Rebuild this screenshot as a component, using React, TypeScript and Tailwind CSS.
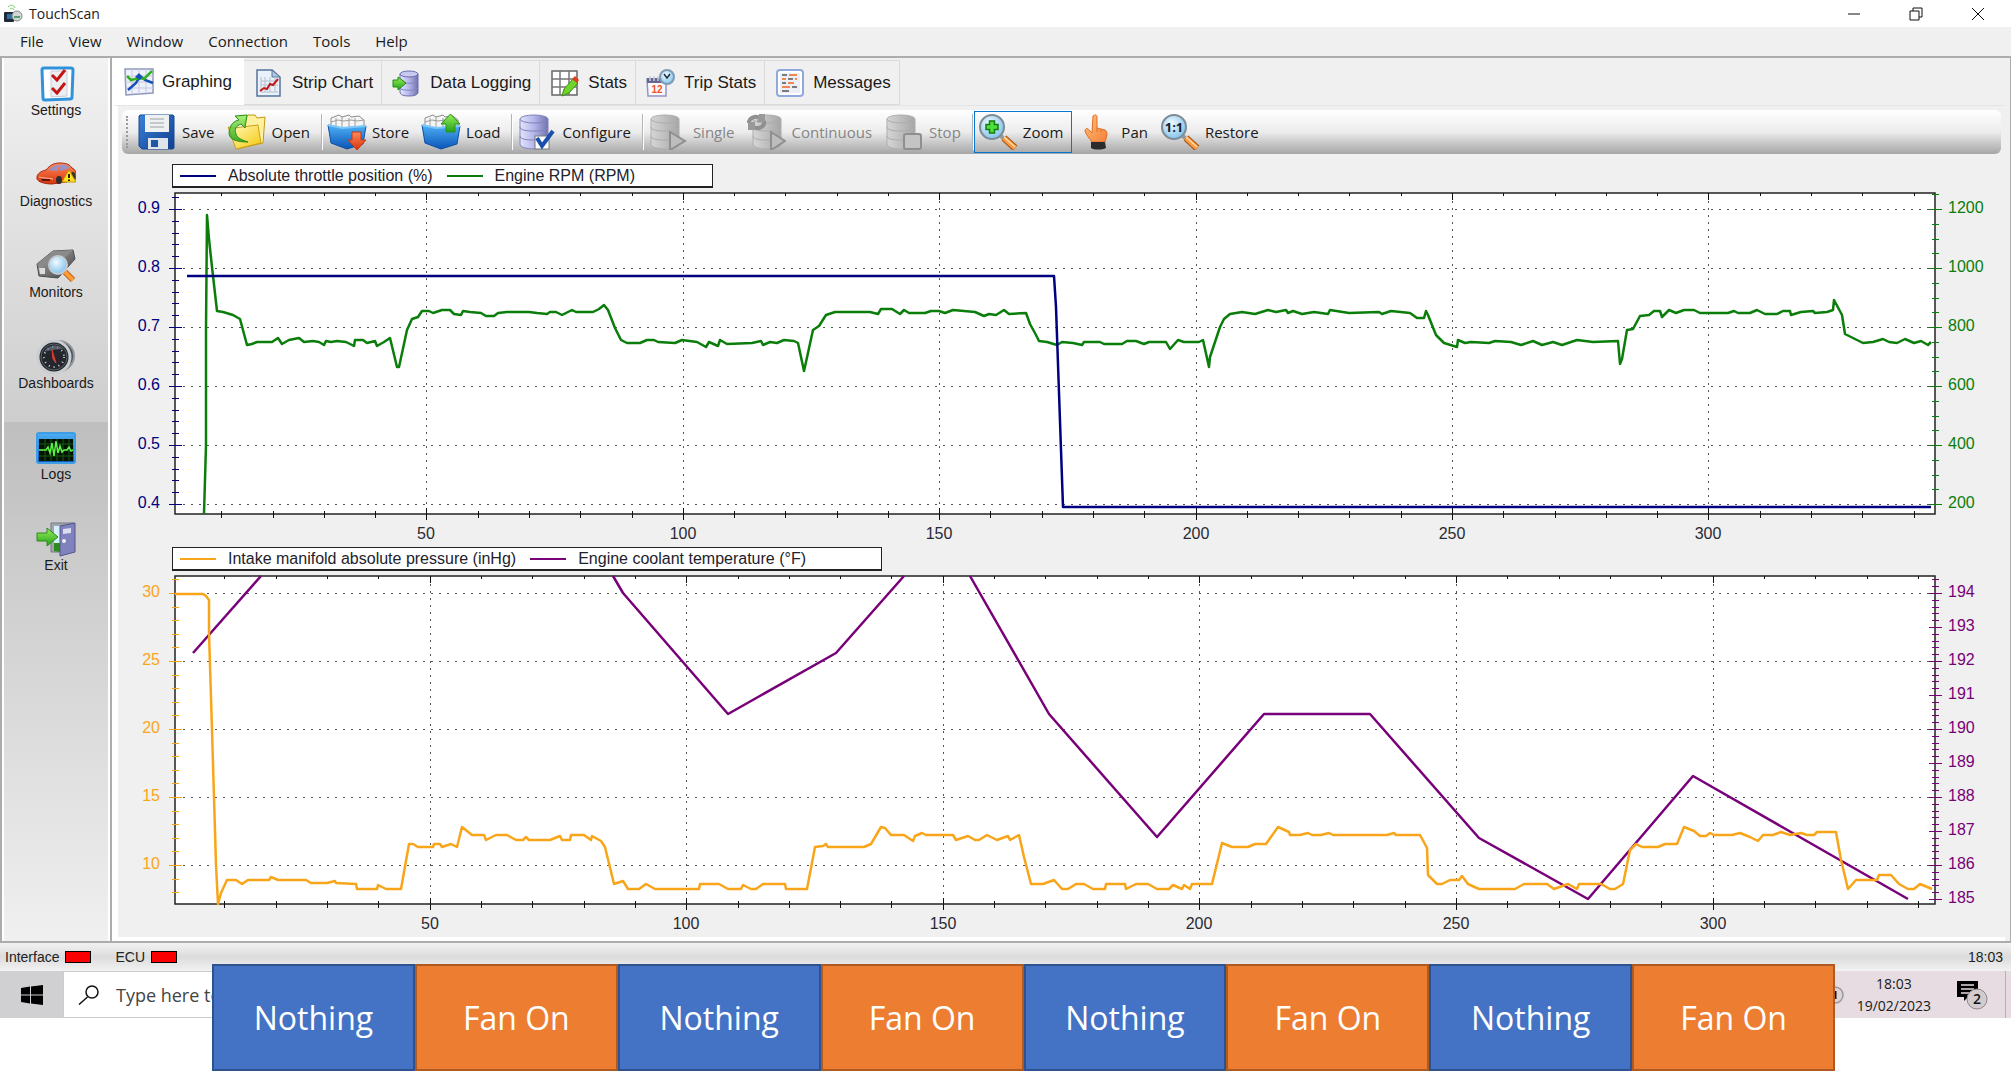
// TouchScan main window — "Logs" page with the Graphing tab open, plus the
// taskbar and the fan annotation strip that sits under the charts.

import type { ReactNode } from "react";
import clsx from "clsx";

type Point = [number, number];

/* ------------------------------------------------------------------ */
/* Chart data. Traces are kept in plot pixels (plot is 1760px wide).   */
/* ------------------------------------------------------------------ */

const RPM =
  "29,321 31,252 31,137 32,22 34,46 37,74 42,118 48,119 58,122 65,126 72,152 77,151 82,149 97,149 103,145 107,151 114,147 124,145 129,149 138,148 144,149 149,152 151,148 156,149 162,148 171,149 179,153 180,147 188,147 192,150 200,148 202,153 209,149 215,145 222,174 224,174 232,137 237,126 243,124 247,118 254,118 258,120 267,117 275,117 279,121 286,122 288,118 295,119 306,120 311,123 319,123 323,120 332,119 354,119 362,120 372,121 375,119 381,119 387,122 397,117 401,119 418,119 424,116 429,112 433,117 440,135 446,147 452,150 465,150 472,147 479,147 483,149 500,150 507,147 522,149 531,154 534,149 543,153 545,147 552,151 577,150 586,148 588,152 595,149 602,150 609,147 619,148 623,150 629,178 631,169 638,137 644,133 651,122 660,119 695,119 703,121 706,116 717,116 725,121 729,117 734,120 750,120 756,118 764,118 770,120 778,117 789,118 800,119 809,123 814,121 821,122 829,117 834,121 851,120 855,131 861,142 864,148 872,149 882,152 887,149 898,150 907,152 909,149 925,149 929,151 947,151 952,148 961,148 969,151 974,149 991,149 995,156 1003,147 1009,149 1024,149 1028,147 1034,174 1035,164 1045,134 1049,126 1055,121 1067,119 1080,121 1093,117 1101,119 1111,117 1113,120 1118,118 1127,121 1139,119 1153,121 1155,117 1174,120 1204,119 1207,121 1216,118 1235,120 1242,125 1249,125 1251,118 1253,122 1261,142 1269,150 1282,154 1283,147 1290,150 1296,149 1314,150 1320,148 1336,149 1346,152 1358,148 1367,152 1378,149 1387,152 1402,147 1418,149 1443,148 1445,171 1447,166 1452,137 1458,136 1465,123 1474,122 1479,118 1485,118 1487,124 1494,117 1501,120 1509,117 1519,117 1525,120 1553,120 1559,118 1563,120 1575,120 1582,117 1590,121 1602,121 1608,118 1615,118 1616,122 1626,119 1638,118 1640,120 1652,119 1658,117 1659,107 1667,122 1670,141 1680,146 1688,150 1698,149 1708,146 1714,149 1722,150 1730,146 1739,150 1746,148 1753,152 1756,149";

const THROTTLE = "12,83 879,83 881,114 888,314 1756,314";

const PRESSURE =
  "0,18 28,18 31,20 34,24 34,57 37,154 41,289 43,328 46,317 52,304 61,304 67,308 73,304 94,304 96,301 103,304 131,304 136,307 152,307 160,305 161,307 181,308 182,313 202,313 203,309 211,313 226,313 234,268 238,268 243,271 258,271 259,268 265,268 267,271 276,268 282,271 287,251 297,259 309,259 311,264 321,259 332,259 341,264 348,264 351,261 354,264 375,264 385,260 387,264 395,264 396,259 409,259 416,264 417,260 426,265 430,271 439,308 448,305 453,313 464,313 471,308 480,313 524,313 525,308 544,308 553,313 566,313 568,309 576,313 581,313 588,308 610,308 611,313 632,313 640,271 648,270 651,268 653,271 689,271 696,268 706,251 710,252 716,259 729,259 738,265 740,260 747,257 751,259 778,259 781,264 793,260 800,264 804,264 812,259 822,264 833,260 835,264 844,259 849,281 856,308 868,308 879,304 887,313 893,313 901,308 909,308 918,313 930,313 931,308 950,308 951,313 961,308 973,308 982,313 994,313 998,309 1007,313 1009,309 1015,313 1017,308 1037,308 1047,267 1057,271 1073,271 1080,268 1091,268 1103,251 1114,256 1115,259 1125,259 1133,257 1137,259 1146,259 1154,257 1158,259 1212,259 1219,257 1221,259 1245,259 1252,272 1253,299 1262,308 1267,308 1275,304 1284,304 1287,300 1293,308 1304,313 1340,313 1349,308 1372,308 1379,313 1393,308 1402,313 1404,308 1426,308 1435,313 1440,313 1448,308 1455,274 1461,268 1467,271 1483,271 1490,268 1502,268 1509,251 1519,255 1525,260 1531,260 1535,257 1539,259 1557,259 1565,257 1575,261 1583,265 1588,259 1598,259 1606,256 1615,259 1626,257 1632,259 1639,259 1642,256 1661,256 1666,284 1673,313 1681,304 1702,304 1704,299 1716,299 1724,308 1733,313 1739,313 1745,308 1757,313";

const COOLANT = [
  "18,77 86,0",
  "438,0 448,17 553,138 661,77 729,0",
  "795,0 874,138 982,261 1089,138 1195,138 1304,262 1413,323 1518,200 1733,323",
];

interface AxisSpec {
  color: string;
  labels: string[];
  first: number; // y of the first label's tick
  step: number; // distance between major ticks
  minor: number; // minor divisions per major
}

interface ChartSpec {
  name: string;
  height: number; // plot height
  boxHeight: number; // svg height
  xStart: number; // x of the tick for 0
  xUnit: number; // width of 10 units
  gridFirst: number;
  gridStep: number;
  left: AxisSpec;
  right: AxisSpec;
  traces: { color: string; points: string }[];
}

const NAVY = "#000080";
const GREEN = "#0a7d0a";
const ORANGE = "#f9a51a";
const PURPLE = "#780078";
const PLOT_W = 1760;

const CHARTS: ChartSpec[] = [
  {
    name: "Throttle position and engine RPM",
    height: 321,
    boxHeight: 359,
    xStart: -5,
    xUnit: 51.28,
    gridFirst: 16,
    gridStep: 59,
    left: {
      color: NAVY,
      labels: ["0.9", "0.8", "0.7", "0.6", "0.5", "0.4"],
      first: 16,
      step: 59,
      minor: 5,
    },
    right: {
      color: GREEN,
      labels: ["1200", "1000", "800", "600", "400", "200"],
      first: 16,
      step: 59,
      minor: 4,
    },
    traces: [
      { color: GREEN, points: RPM },
      { color: NAVY, points: THROTTLE },
    ],
  },
  {
    name: "Manifold pressure and coolant temperature",
    height: 328,
    boxHeight: 366,
    xStart: -2,
    xUnit: 51.32,
    gridFirst: 17,
    gridStep: 68,
    left: {
      color: ORANGE,
      labels: ["30", "25", "20", "15", "10"],
      first: 17,
      step: 68,
      minor: 5,
    },
    right: {
      color: PURPLE,
      labels: ["194", "193", "192", "191", "190", "189", "188", "187", "186", "185"],
      first: 17,
      step: 34,
      minor: 5,
    },
    traces: [
      ...COOLANT.map((points) => ({ color: PURPLE, points })),
      { color: ORANGE, points: PRESSURE },
    ],
  },
];

function minorTicks(axis: AxisSpec, height: number): number[] {
  const gap = axis.step / axis.minor;
  const ticks: number[] = [];
  let y = axis.first;
  while (y - gap > 1) y -= gap;
  for (; y < height - 2; y += gap) ticks.push(Math.round(y));
  return ticks;
}

function Axis({ axis, x, height, side }: { axis: AxisSpec; x: number; height: number; side: "left" | "right" }) {
  return (
    <g stroke={axis.color} strokeWidth="1" shapeRendering="crispEdges">
      {minorTicks(axis, height).map((y) => (
        <line key={y} x1={x - 3} x2={x + 4} y1={y + 0.5} y2={y + 0.5} />
      ))}
      {axis.labels.map((label, i) => {
        const y = axis.first + i * axis.step;
        return (
          <g key={label}>
            <line x1={x - 6} x2={x + 7} y1={y + 0.5} y2={y + 0.5} />
            <text
              x={side === "left" ? -15 : PLOT_W + 13}
              y={y + 4}
              textAnchor={side === "left" ? "end" : "start"}
              fill={axis.color}
              stroke="none"
              fontSize="16"
            >
              {label}
            </text>
          </g>
        );
      })}
    </g>
  );
}

function Chart({ chart }: { chart: ChartSpec }) {
  const h = chart.height;
  const xs = Array.from({ length: 34 }, (_, i) => ({
    n: i + 1,
    x: Math.round(chart.xStart + (i + 1) * chart.xUnit),
  })).filter((t) => t.x > 5);
  const majors = xs.filter((t) => t.n % 5 === 0);
  const rows = Array.from(
    { length: Math.floor((h - chart.gridFirst) / chart.gridStep) + 1 },
    (_, i) => chart.gridFirst + i * chart.gridStep,
  );

  return (
    <svg
      role="img"
      aria-label={chart.name}
      viewBox={`-57 -5 1887 ${chart.boxHeight}`}
      className="block w-full font-['Liberation_Sans',sans-serif]"
    >
      <rect x="0" y="0" width={PLOT_W} height={h} fill="#fff" />
      <g stroke="#555" strokeWidth="1" shapeRendering="crispEdges">
        {rows.map((y) => (
          <line key={y} x1="8" x2={PLOT_W} y1={y + 0.5} y2={y + 0.5} strokeDasharray="2 6" />
        ))}
        {majors.map((t) => (
          <line key={t.n} y1="8" y2={h} x1={t.x + 0.5} x2={t.x + 0.5} strokeDasharray="2 5" />
        ))}
      </g>
      <rect x="0" y="0" width={PLOT_W} height={h} fill="none" stroke="#222" strokeWidth="1.5" />
      <g stroke="#111" shapeRendering="crispEdges">
        {xs.map(({ n, x }) => {
          const major = n % 5 === 0;
          return (
            <g key={n}>
              <line x1={x + 0.5} x2={x + 0.5} y1="0" y2={major ? 7 : 3} />
              <line x1={x + 0.5} x2={x + 0.5} y1={h - (major ? 6 : 3)} y2={h + (major ? 6 : 4)} />
            </g>
          );
        })}
      </g>
      {majors.map((t) => (
        <text key={t.n} x={t.x} y={h + 25} textAnchor="middle" fontSize="16" fill="#2a2a33">
          {t.n * 10}
        </text>
      ))}
      <Axis axis={chart.left} x={0} height={h} side="left" />
      <Axis axis={chart.right} x={PLOT_W} height={h} side="right" />
      {chart.traces.map((t) => (
        <polyline key={t.points} points={t.points} fill="none" stroke={t.color} strokeWidth="2.5" strokeLinejoin="round" />
      ))}
    </svg>
  );
}

function Legend({ className, children }: { className: string; children: ReactNode }) {
  return (
    <div className={clsx("ml-[54px] flex h-6 items-center gap-3.5 border border-b-2 border-[#222] bg-white pl-[7px]", className)}>
      {children}
    </div>
  );
}

function LegendKey({ swatch, children }: { swatch: string; children: ReactNode }) {
  return (
    <span className="flex items-center gap-3">
      <span className={clsx("h-0.5 w-9", swatch)} />
      {children}
    </span>
  );
}

/* ------------------------------------------------------------------ */
/* Icons                                                               */
/* ------------------------------------------------------------------ */

function Gradients() {
  return (
    <svg className="absolute size-0" aria-hidden="true">
      <defs>
        <linearGradient id="blue" x1="0" y1="0" x2="0" y2="1">
          <stop offset="0" stopColor="#4fb0f5" />
          <stop offset="1" stopColor="#0a55b8" />
        </linearGradient>
        <linearGradient id="navy" x1="0" y1="0" x2="1" y2="1">
          <stop offset="0" stopColor="#3a82d8" />
          <stop offset="1" stopColor="#123f8e" />
        </linearGradient>
        <linearGradient id="green" x1="0" y1="0" x2="0" y2="1">
          <stop offset="0" stopColor="#9af05a" />
          <stop offset="1" stopColor="#22a01a" />
        </linearGradient>
        <linearGradient id="red" x1="0" y1="0" x2="0" y2="1">
          <stop offset="0" stopColor="#ff8a5c" />
          <stop offset="1" stopColor="#d8330c" />
        </linearGradient>
        <linearGradient id="yellow" x1="0" y1="0" x2="1" y2="1">
          <stop offset="0" stopColor="#fffbc0" />
          <stop offset="1" stopColor="#f5c80a" />
        </linearGradient>
        <linearGradient id="violet" x1="0" y1="0" x2="1" y2="0">
          <stop offset="0" stopColor="#e4e4fb" />
          <stop offset="0.5" stopColor="#b4b6ea" />
          <stop offset="1" stopColor="#7173ae" />
        </linearGradient>
        <linearGradient id="grey" x1="0" y1="0" x2="1" y2="0">
          <stop offset="0" stopColor="#d6d6d6" />
          <stop offset="1" stopColor="#a6a6a6" />
        </linearGradient>
        <linearGradient id="steel" x1="0" y1="0" x2="1" y2="1">
          <stop offset="0" stopColor="#b4b4b4" />
          <stop offset="1" stopColor="#3c3c3c" />
        </linearGradient>
        <radialGradient id="lens" cx="0.4" cy="0.35" r="0.7">
          <stop offset="0" stopColor="#f2fbff" />
          <stop offset="1" stopColor="#7cc0ec" />
        </radialGradient>
        <linearGradient id="skin" x1="0" y1="0" x2="1" y2="1">
          <stop offset="0" stopColor="#ffc07a" />
          <stop offset="1" stopColor="#f4813a" />
        </linearGradient>
      </defs>
    </svg>
  );
}

function Icon({ box = "0 0 40 36", className = "h-9 w-10", children }: { box?: string; className?: string; children: ReactNode }) {
  return (
    <svg viewBox={box} className={clsx("shrink-0", className)} fill="none" aria-hidden="true">
      {children}
    </svg>
  );
}

const SettingsIcon = () => (
  <Icon>
    <path d="M8 2h27a2 2 0 0 1 2 2l-1 27a2 2 0 0 1-2 2L9 34a2 2 0 0 1-2-2L6 4a2 2 0 0 1 2-2Z" fill="#fff" stroke="#2f93dc" strokeWidth="3" />
    <path d="M15 5h16v25l-16 1Z" fill="#eceef1" stroke="#c8ccd2" />
    <path d="m16 9 5 5 8-10M16 22l5 5 8-10" stroke="#c41414" strokeWidth="3" />
  </Icon>
);

const CarIcon = () => (
  <Icon>
    <path d="M1 20c0-3 4-6 9-7 4-5 8-7 14-7 7 0 10 2 12 5 3 1 4 4 4 7l-1 5-9 2-14 2C9 27 2 25 1 22Z" fill="url(#red)" stroke="#a52a10" />
    <path d="M13 13c3-4 6-5 10-5l-2 6ZM24 8c5-1 8 0 10 3l-10 3Z" fill="#9a92c4" />
    <path d="M3 20c4 1 8 1 14 2" stroke="#ffb595" />
    <path d="M5 22h9v2H6Z" fill="#5c1408" />
    <ellipse cx="23" cy="23" rx="3" ry="4" fill="#2d2d30" />
    <ellipse cx="37" cy="19" rx="2" ry="4" fill="#2d2d30" />
    <path d="M33 13l7 12H26Z" fill="#ffe11f" stroke="#c09a00" />
    <path d="M33 17v4M33 22.5v1.500" stroke="#222" strokeWidth="2" />
  </Icon>
);

const MonitorIcon = () => (
  <Icon>
    <path d="M1 16 17 3l20-1 2 9-17 19L3 28Z" fill="url(#steel)" stroke="#4a4a4a" />
    <path d="M1 16 17 3l20-1-16 15-18 1Z" fill="#8a8a8a" />
    <path d="M3 20h6v6H4Z" fill="#ddd" />
    <circle cx="22" cy="17" r="9" fill="url(#lens)" stroke="#c3ccd3" strokeWidth="2" />
    <path d="m29 24 8 8" stroke="#b5500c" strokeWidth="6" />
    <path d="m29 24 8 8" stroke="#ff9c36" strokeWidth="4" />
  </Icon>
);

const GaugeIcon = () => (
  <Icon>
    <circle cx="23" cy="17" r="15" fill="#4d545c" stroke="#8f979e" strokeWidth="2" />
    <circle cx="18" cy="18" r="16" fill="#23262c" stroke="#c9ced2" strokeWidth="3" />
    <circle cx="18" cy="18" r="13" stroke="#5b6168" />
    <circle cx="18" cy="18" r="10" stroke="#cfd4d8" strokeWidth="2" strokeDasharray="1 4" />
    <path d="M8 13c3-7 14-9 19-3-5 0-13 1-19 3Z" fill="#6c7684" opacity="0.7" />
    <path d="m16 11 4 13-3-4Z" fill="#e23a2e" stroke="#e23a2e" />
  </Icon>
);

const LogsIcon = () => (
  <Icon>
    <rect x="1" y="3" width="38" height="30" rx="2" fill="url(#blue)" stroke="#3f9de6" strokeWidth="2" />
    <rect x="3" y="9" width="34" height="22" fill="#041204" />
    <path d="M3 14h34M3 20h34M3 26h34M9 9v22M15 9v22M21 9v22M27 9v22M33 9v22" stroke="#125c12" />
    <path d="M3 20h7l2-3 2 6 2-10 2 13 2-15 2 12 2-7 2 6 2-2h3l2-3 2 4 2-1" stroke="#5df046" strokeWidth="1.5" />
  </Icon>
);

const ExitIcon = () => (
  <Icon>
    <path d="M15 2h23v29H15Z" fill="#a2a6ae" stroke="#777b84" />
    <path d="M18 5h8v25h-8Z" fill="#d5f0ff" />
    <path d="M18 22h6v9l-6-1Z" fill="#2b8c1d" />
    <path d="m24 5 15-3v29l-15 4Z" fill="#8082bd" stroke="#53558b" />
    <path d="m27 8 8-1v5l-8 1Z" fill="#dcdcf2" />
    <circle cx="28" cy="20" r="2" fill="#eee" />
    <path d="M1 12h10V7l11 9-11 9v-5H1Z" fill="url(#green)" stroke="#2c8a1a" />
  </Icon>
);

const SaveIcon = () => (
  <Icon>
    <path d="M3 1h33l1 1v32l-1 1H5l-3-3V2Z" fill="url(#navy)" stroke="#174a94" />
    <path d="M8 1h24v17H8Z" fill="#eef0f2" />
    <path d="M13 5h14M13 9h14M13 13h14" stroke="#b7bcc2" strokeWidth="1.5" />
    <path d="M11 24h20v11H11Z" fill="#dfe4ea" />
    <path d="M14 26h7v7h-7Z" fill="#1d58a8" />
  </Icon>
);

const OpenIcon = () => (
  <Icon>
    <path d="m20 4 2-3h7l2 3 8-1-2 26-26 6Z" fill="#fff1a0" stroke="#c29a12" />
    <path d="M2 13l6 1 24-3 3 18-25 6Z" fill="url(#yellow)" stroke="#c9a018" />
    <path d="M3 19C4 10 8 7 13 6l-4-4 12-1-2 13-4-4c-5 2-7 5-5 10 1 4 6 6 12 8C12 28 3 26 3 19Z" fill="url(#green)" fillOpacity="0.85" stroke="#2a8c1c" />
  </Icon>
);

function Crate({ children }: { children: ReactNode }) {
  return (
    <Icon>
      <path d="m4 4 8-3 3 2 7-2 2 2 8-1 5 4v9H4Z" fill="#f5f5f5" stroke="#8c8c8c" />
      <path d="M9 4v9M15 3v10M22 4v9M28 4v9M4 8l7-2 6 1 7-1 6 1 7-1" stroke="#9d9d9d" />
      <path d="m1 11 14 3 24-2-3 18-16 5-16-6Z" fill="url(#blue)" stroke="#0d4fa3" />
      <path d="m1 11 14 3 24-2" stroke="#7cc8fb" strokeWidth="2" />
      {children}
    </Icon>
  );
}

const StoreIcon = () => (
  <Crate>
    <path d="M25 18h9v8h5l-9 10-9-10h4Z" fill="url(#red)" stroke="#c23a10" />
  </Crate>
);

const LoadIcon = () => (
  <Crate>
    <path d="M25 18V10h-5L29.5 0 39 10h-5v8Z" fill="url(#green)" stroke="#2a9020" />
  </Crate>
);

function Drum({ fill, line }: { fill: string; line: string }) {
  return (
    <>
      <path d="M3 5v25c0 3 6 5 14 5s14-2 14-5V5Z" fill={fill} stroke={line} />
      <ellipse cx="17" cy="5" rx="14" ry="4" fill={fill} stroke={line} />
      <path d="M3 13c0 3 6 4 14 4s14-1 14-4M3 22c0 3 6 4 14 4s14-1 14-4" stroke={line} />
    </>
  );
}

const ConfigureIcon = () => (
  <Icon>
    <Drum fill="url(#violet)" line="#8083bd" />
    <rect x="18" y="22" width="14" height="13" fill="#fff" stroke="#777" />
    <path d="m20 24 5 8 11-15" stroke="#1a4fae" strokeWidth="4" />
  </Icon>
);

const SingleIcon = () => (
  <Icon>
    <Drum fill="url(#grey)" line="#adadad" />
    <path d="m22 18 15 9-15 9Z" fill="#bdbdbd" stroke="#8f8f8f" strokeWidth="2" />
  </Icon>
);

const ContinuousIcon = () => (
  <Icon>
    <g transform="translate(4 0)">
      <Drum fill="url(#grey)" line="#adadad" />
    </g>
    <path d="m25 18 14 9-14 9Z" fill="#bdbdbd" stroke="#8f8f8f" strokeWidth="2" />
    <path d="M3 9C3 4 9 1 14 4M18 7c1 5-4 9-11 6" stroke="#8f8f8f" strokeWidth="4" />
    <path d="M13 0h6v8h-8ZM9 16H2V8h7Z" fill="#999" />
  </Icon>
);

const StopIcon = () => (
  <Icon>
    <Drum fill="url(#grey)" line="#adadad" />
    <rect x="20" y="20" width="17" height="15" rx="2" fill="#c4c4c4" stroke="#8f8f8f" strokeWidth="2" />
  </Icon>
);

function Lens({ children }: { children: ReactNode }) {
  return (
    <Icon>
      <path d="m23 22 5 5" stroke="#999" strokeWidth="4" />
      <path d="m26 24 11 10" stroke="#a0521a" strokeWidth="7" />
      <path d="m26 24 11 10" stroke="#ff9a3c" strokeWidth="5" />
      <path d="m26 23 11 10" stroke="#ffd9a6" strokeWidth="1.5" />
      <circle cx="14" cy="13" r="12" fill="url(#lens)" stroke="#7d8b95" strokeWidth="2" />
      {children}
    </Icon>
  );
}

const ZoomIcon = () => (
  <Lens>
    <path d="M11.5 7h5v3.5H20v5h-3.5V19h-5v-3.5H8v-5h3.5Z" fill="#4ee03a" stroke="#147a12" strokeWidth="1.5" />
  </Lens>
);

const RestoreIcon = () => (
  <Lens>
    <text x="14" y="18" textAnchor="middle" fontSize="13" fontWeight="700" fill="#16202a">
      1:1
    </text>
  </Lens>
);

const PanIcon = () => (
  <Icon>
    <path d="M17 2c2-2 4-1 4 1v11l8 2c2 1 2 3 2 5l-2 7H16c-2-3-6-7-7-11 0-3 3-3 4-1l3 3Z" fill="url(#skin)" stroke="#e06f25" />
    <path d="M21 14v4M25 15v3" stroke="#e06f25" />
    <path d="M15 28h14l1 6c-4 2-12 2-15 0Z" fill="#2c2c2e" />
  </Icon>
);

function TabIcon({ children }: { children: ReactNode }) {
  return (
    <Icon box="0 0 30 28" className="h-7 w-[30px]">
      {children}
    </Icon>
  );
}

const GraphingIcon = () => (
  <TabIcon>
    <path d="M1 1h28v24L2 27Z" fill="#eef1fa" stroke="#8f98bd" strokeWidth="1.5" />
    <path d="M8 1v25M15 1v25M22 1v24M1 8h28M1 14h28M2 20h27" stroke="#c3c9e2" />
    <path d="m4 22 8-7 4-7 5 4 8 3" stroke="#1750b4" strokeWidth="2.5" />
    <path d="m3 8 4 4 8-2 5 1 8-8" stroke="#35b021" strokeWidth="2.5" />
    <path d="m11 9 4-4 3 4-2 3Z" fill="#1750b4" />
  </TabIcon>
);

const StripIcon = () => (
  <TabIcon>
    <path d="M3 1h15l8 7v19H3Z" fill="#e9f1fb" stroke="#54749c" strokeWidth="1.5" />
    <path d="M18 1v7h8Z" fill="#b2c8e2" stroke="#54749c" />
    <path d="M7 8v15h17M7 12h17M7 16h17M11 8v15M16 8v15M21 8v15" stroke="#b4c0d0" />
    <path d="m6 22 4-3 3 1 3-5 3 1 5-6" stroke="#c41818" strokeWidth="2" />
  </TabIcon>
);

const LoggingIcon = () => (
  <TabIcon>
    <path d="M8 5v18c0 3 4 4 9 4s9-1 9-4V5Z" fill="url(#violet)" stroke="#6a6cab" />
    <ellipse cx="17" cy="5" rx="9" ry="3" fill="#c8c9f0" stroke="#6a6cab" />
    <path d="M8 12c1 3 17 3 18 0M8 19c1 3 17 3 18 0" stroke="#8386c4" />
    <path d="M1 11h5V8l8 6-8 7v-3H1Z" fill="url(#green)" stroke="#1f8a17" />
  </TabIcon>
);

const StatsIcon = () => (
  <TabIcon>
    <path d="M2 2h25v24H2Z" fill="#fff" stroke="#666" strokeWidth="1.5" />
    <path d="M2 10h25M2 18h25M10 2v24M19 2v24" stroke="#777" strokeWidth="1.5" />
    <path d="M12 27l2-7 9-10 5 4-9 10Z" fill="#6fd52c" stroke="#3a8c14" />
    <path d="m22 10 3-3 4 4-2 3Z" fill="#e43d22" />
  </TabIcon>
);

const TripIcon = () => (
  <TabIcon>
    <path d="M1 10h19v17H2Z" fill="#fbfbff" stroke="#9193c2" strokeWidth="1.5" />
    <path d="M1 9h19v5H1Z" fill="#66688f" />
    <path d="M4 7v5M8 7v5M12 7v5" stroke="#c9cae0" strokeWidth="1.5" />
    <text x="11" y="24" textAnchor="middle" fontSize="10" fontWeight="700" fill="#f0541c">
      12
    </text>
    <circle cx="21" cy="8" r="7" fill="url(#lens)" stroke="#7e9cb5" strokeWidth="2" />
    <path d="m18 5 3 4 3-4" stroke="#1b2c3a" strokeWidth="1.5" />
  </TabIcon>
);

const MessagesIcon = () => (
  <TabIcon>
    <rect x="2" y="1" width="26" height="26" rx="3" fill="#fff" stroke="#8fa9dc" strokeWidth="2" />
    <rect x="5" y="4" width="20" height="20" fill="#eceff6" />
    <path d="M7 6h5M13 10h5M7 14h4M17 18h5M7 22h7" stroke="#555" strokeWidth="1.5" />
    <path d="M14 6h8M7 10h4M20 10h2M13 14h6M7 18h8" stroke="#f2651d" strokeWidth="1.5" />
  </TabIcon>
);

const AppIcon = () => (
  <Icon box="0 0 20 20" className="size-5">
    <path d="M5 3c3-3 6-2 7 1M7 5c2-1 3-1 4 1" stroke="#7bcf6c" />
    <rect x="1" y="8" width="10" height="10" rx="1" fill="#1d2a35" />
    <rect x="4" y="10" width="5" height="5" fill="#2f6ea5" />
    <ellipse cx="14" cy="12" rx="5" ry="5" fill="#d2d6d4" stroke="#7f8a86" />
    <path d="M11 13h6" stroke="#2d8a58" strokeWidth="1.5" />
  </Icon>
);

/* ------------------------------------------------------------------ */
/* Window pieces                                                       */
/* ------------------------------------------------------------------ */

const MENUS = ["File", "View", "Window", "Connection", "Tools", "Help"];

const SIDEBAR = [
  { label: "Settings", icon: SettingsIcon },
  { label: "Diagnostics", icon: CarIcon },
  { label: "Monitors", icon: MonitorIcon },
  { label: "Dashboards", icon: GaugeIcon },
  { label: "Logs", icon: LogsIcon, active: true },
  { label: "Exit", icon: ExitIcon },
];

const TABS = [
  { label: "Graphing", icon: GraphingIcon, active: true },
  { label: "Strip Chart", icon: StripIcon },
  { label: "Data Logging", icon: LoggingIcon },
  { label: "Stats", icon: StatsIcon },
  { label: "Trip Stats", icon: TripIcon },
  { label: "Messages", icon: MessagesIcon },
];

const TOOLS = [
  [
    { label: "Save", icon: SaveIcon },
    { label: "Open", icon: OpenIcon },
  ],
  [
    { label: "Store", icon: StoreIcon },
    { label: "Load", icon: LoadIcon },
  ],
  [{ label: "Configure", icon: ConfigureIcon }],
  [
    { label: "Single", icon: SingleIcon, disabled: true },
    { label: "Continuous", icon: ContinuousIcon, disabled: true },
    { label: "Stop", icon: StopIcon, disabled: true },
  ],
  [
    { label: "Zoom", icon: ZoomIcon, pressed: true },
    { label: "Pan", icon: PanIcon },
    { label: "Restore", icon: RestoreIcon },
  ],
] as { label: string; icon: () => ReactNode; disabled?: boolean; pressed?: boolean }[][];

const PHASES = ["Nothing", "Fan On", "Nothing", "Fan On", "Nothing", "Fan On", "Nothing", "Fan On"];

function TitleBar() {
  const strokes: { label: string; points: Point[][] }[] = [
    { label: "Minimize", points: [[[1, 7], [13, 7]]] },
    { label: "Restore down", points: [[[1, 4], [10, 4], [10, 13], [1, 13], [1, 4]], [[4, 4], [4, 1], [13, 1], [13, 10], [10, 10]]] },
    { label: "Close", points: [[[1, 1], [13, 13]], [[13, 1], [1, 13]]] },
  ];
  return (
    <header className="flex h-[27px] items-center bg-white pr-0.5 pl-[3px]">
      <AppIcon />
      <h1 className="ml-1.5 text-sm">TouchScan</h1>
      <div className="ml-auto flex">
        {strokes.map((s) => (
          <button key={s.label} aria-label={s.label} className="grid h-[27px] w-[62px] place-items-center">
            <svg viewBox="0 0 14 14" className="size-3.5" fill="none" stroke="#111">
              {s.points.map((p, i) => (
                <polyline key={i} points={p.join(" ")} />
              ))}
            </svg>
          </button>
        ))}
      </div>
    </header>
  );
}

function Sidebar() {
  return (
    <aside className="w-28 shrink-0 border-x-2 border-[#acacac] bg-white px-0.5">
      <nav className="h-full bg-linear-to-b from-[#f2f2f2] via-[#c6c6c6] to-[#f0f0f0] font-['Liberation_Sans',sans-serif] text-sm/4">
        {SIDEBAR.map(({ label, icon: I, active }) => (
          <button
            key={label}
            className={clsx(
              "flex h-[91px] w-full flex-col items-center pt-2",
              active && "bg-linear-to-b from-[#bfbfbf] to-[#c6c6c6]",
            )}
          >
            <I />
            {label}
          </button>
        ))}
      </nav>
    </aside>
  );
}

function Tabs() {
  return (
    <div role="tablist" className="flex items-start bg-[#f0f0f0] font-['Liberation_Sans',sans-serif] text-[17px]">
      {TABS.map(({ label, icon: I, active }) => (
        <button
          key={label}
          role="tab"
          aria-selected={!!active}
          className={clsx(
            "flex items-center gap-2",
            active ? "h-[47px] bg-white px-3" : "mt-0.5 h-[45px] border border-l-0 border-[#dadada] pr-2 pl-2.5",
          )}
        >
          <I />
          {label}
        </button>
      ))}
    </div>
  );
}

function Toolbar() {
  return (
    <div
      role="toolbar"
      className="mx-1 mt-1 flex h-11 items-center rounded-md bg-linear-to-b from-white via-[#ececec] to-[#a6a6a6] pl-1"
    >
      <span className="mr-[5px] h-8 border-l-2 border-dotted border-[#9a9a9a]" />
      {TOOLS.map((group, i) => (
        <div key={i} className="flex items-center">
          {i > 0 && <span className="ml-[3px] h-9 w-0.5 border-l border-[#b4b4b4] bg-white" />}
          {group.map(({ label, icon: I, disabled, pressed }) => (
            <button
              key={label}
              disabled={disabled}
              aria-pressed={pressed}
              className={clsx(
                "flex h-[42px] items-center gap-[5px] pr-2 text-[15px]",
                pressed ? "border border-[#0078d7] pl-[3px]" : "pl-1",
                disabled && "text-[#858585]",
              )}
            >
              <I />
              {label}
            </button>
          ))}
        </div>
      ))}
    </div>
  );
}

function Graphs() {
  return (
    <div className="pt-2.5 font-['Liberation_Sans',sans-serif] text-base/4 text-[#22222c]">
      <Legend className="w-[541px]">
        <LegendKey swatch="bg-[#000080]">Absolute throttle position (%)</LegendKey>
        <LegendKey swatch="bg-[#0a7d0a]">Engine RPM (RPM)</LegendKey>
      </Legend>
      <Chart chart={CHARTS[0]} />
      <Legend className="w-[710px]">
        <LegendKey swatch="bg-[#f9a51a]">Intake manifold absolute pressure (inHg)</LegendKey>
        <LegendKey swatch="bg-[#780078]">Engine coolant temperature (°F)</LegendKey>
      </Legend>
      <Chart chart={CHARTS[1]} />
    </div>
  );
}

function StatusLamp({ label }: { label: string }) {
  return (
    <span className="flex items-center gap-1.5">
      {label}
      <span className="h-3 w-[26px] border border-black bg-[#fb0000]" />
    </span>
  );
}

function StatusBar() {
  return (
    <div className="flex h-7 items-center gap-6 bg-linear-to-b from-[#f2f2f2] via-[#dcdcdc] to-[#f2f2f2] pr-2 pl-[5px] font-['Liberation_Sans',sans-serif] text-sm text-[#222]">
      <StatusLamp label="Interface" />
      <StatusLamp label="ECU" />
      <span className="ml-auto">18:03</span>
    </div>
  );
}

function Taskbar() {
  return (
    <div className="flex h-[47px] bg-[#e6dce1]">
      <button aria-label="Start" className="grid w-[63px] place-items-center bg-[#d0cfd1]">
        <svg viewBox="0 0 22 20" className="h-5 w-[22px]" fill="#000">
          <path d="M0 3 9 1.500V9.500H0ZM10 1.400 22 0v9.500H10ZM0 10.500h9v8L0 17ZM10 10.500h12V20l-12-1.500Z" />
        </svg>
      </button>
      <label className="flex w-[460px] items-center border border-[#ccc] bg-white pl-3.5">
        <svg viewBox="0 0 22 20" className="h-5 w-[22px]" fill="none" stroke="#111" strokeWidth="1.5">
          <circle cx="14" cy="7" r="6" />
          <path d="m9.500 12-8.500 7.500" />
        </svg>
        <input
          type="text"
          aria-label="Search"
          placeholder="Type here to search"
          className="ml-4 w-72 text-lg outline-none placeholder:text-[#444]"
        />
      </label>
      <div className="ml-auto flex items-center">
        <svg viewBox="0 0 20 20" className="size-5" fill="none" stroke="#999" strokeWidth="1.5">
          <circle cx="10" cy="10" r="8" fill="#ddd4d8" />
          <path d="M10 6v8" stroke="#111" strokeWidth="3" />
        </svg>
        <div className="ml-3 text-center text-sm/[22px]">
          <div>18:03</div>
          <div>19/02/2023</div>
        </div>
        <button aria-label="2 notifications" className="ml-[26px]">
          <svg viewBox="0 0 32 30" className="h-[30px] w-8">
            <path d="M0 1h21v16H11l-4 4v-4H0Z" fill="#000" />
            <path d="M4 5h13M4 9h13M4 13h9" stroke="#e6dce1" strokeWidth="1.5" />
            <circle cx="20" cy="19" r="10" fill="#d3cccf" stroke="#8d888a" />
            <text x="20" y="24" textAnchor="middle" fontSize="14" fontWeight="600" fill="#111">
              2
            </text>
          </svg>
        </button>
        <span className="ml-4 h-[47px] w-1.5 border-l border-[#b9b0b4]" />
      </div>
    </div>
  );
}

export default function App() {
  return (
    <div className="flex min-h-screen flex-col bg-white font-['Open_Sans',sans-serif] text-[#1a1a1a]">
      <Gradients />
      <TitleBar />
      <nav className="flex h-[29px] items-center gap-[25px] bg-[#f0f0f0] pl-5 text-[15px]">
        {MENUS.map((m) => (
          <button key={m}>{m}</button>
        ))}
      </nav>
      <div className="flex flex-1 border-y-2 border-[#acacac]">
        <Sidebar />
        <main className="min-w-0 flex-1 border-r border-[#acacac] bg-[#f0f0f0]">
          <Tabs />
          <div className="mr-[5px] border-t border-b-4 border-l-6 border-white border-t-[#e4e4e4] bg-[#f0f0f0]">
            <Toolbar />
            <Graphs />
          </div>
        </main>
      </div>
      <footer className="relative pb-[53px]">
        <StatusBar />
        <Taskbar />
        {/* fan phases, aligned under the chart */}
        <ol className="absolute right-[176px] bottom-0 left-[212px] flex h-[107px] text-[32px] text-white">
          {PHASES.map((p, i) => (
            <li
              key={i}
              className={clsx(
                "flex flex-1 items-center justify-center border-2",
                p === "Nothing" ? "border-[#2f528f] bg-[#4472c4]" : "border-[#ae5a21] bg-[#ed7d31]",
              )}
            >
              {p}
            </li>
          ))}
        </ol>
      </footer>
    </div>
  );
}
